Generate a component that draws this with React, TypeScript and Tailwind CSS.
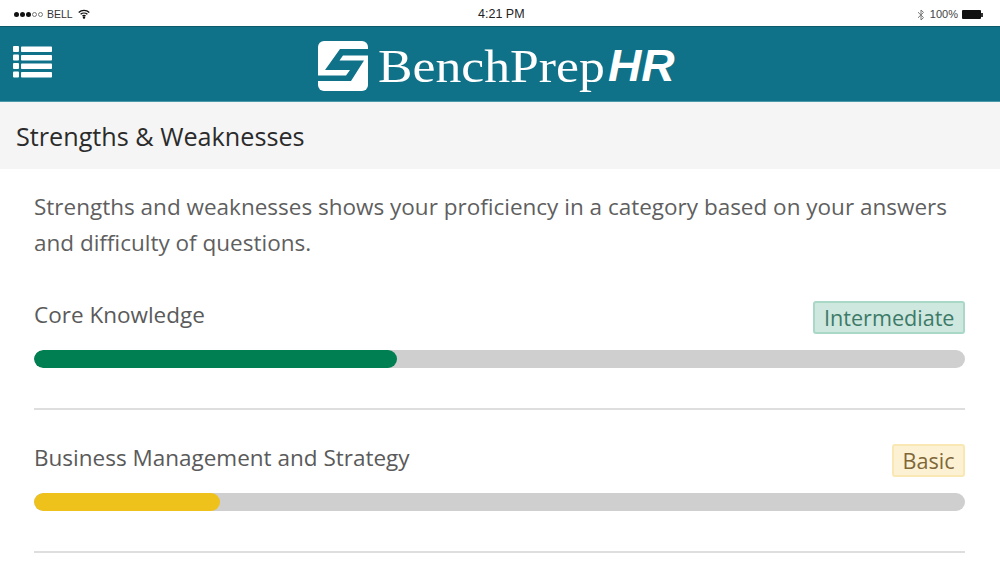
import React from "react";

function ListIcon() {
  return (
    <svg width="42" height="34" viewBox="0 0 42 34" fill="#fff">
      {[0, 8.5, 17, 25.5].map((y) => (
        <g key={y}>
          <rect x="1" y={y + 1} width="6" height="6" rx="1" />
          <rect x="9" y={y + 1.5} width="31" height="5.5" rx="0.8" />
        </g>
      ))}
    </svg>
  );
}

function Logo() {
  return (
    <svg width="50" height="50" viewBox="0 0 50 50">
      <rect width="50" height="50" rx="6" fill="#fff" />
      <path d="M22 8H50V14.5H25L21.5 19.5H46L33 40H0V34.5H28L32 29H7Z" fill="#107288" />
    </svg>
  );
}

function Row({ label, level, pct, barColor, badge }: { label: string; level: string; pct: number; barColor: string; badge: string }) {
  return (
    <div className="border-b-2 border-[#dedede] h-[109px] mb-[34px]">
      <div className="flex justify-between items-start h-[49px]">
        <span className="text-[22.5px] leading-[28px] text-[#5a5a5a]">{label}</span>
        <span className={`text-[21.6px] leading-[29px] px-[8.5px] h-[33px] rounded-[3px] border-2 ${badge}`}>{level}</span>
      </div>
      <div className="h-[18px] rounded-[9px] bg-[#cfcfcf] overflow-hidden">
        <div className={`h-full rounded-[9px] ${barColor}`} style={{ width: `${pct}%` }} />
      </div>
    </div>
  );
}

export default function App() {
  return (
    <div className="w-[1000px] h-[563px] overflow-hidden bg-white font-['Open_Sans',sans-serif]">
      <div className="relative h-[26px] flex items-center justify-between pl-[14px] pr-[17px] pt-[3px] font-['Liberation_Sans',sans-serif] text-[10.5px] text-[#333]">
        <div className="flex items-center gap-[3px]">
          <span className="flex gap-[1px]">
            {[1, 1, 1, 0, 0].map((f, i) => (
              <span key={i} className={f ? "w-[5px] h-[5px] rounded-full bg-[#111]" : "w-[5px] h-[5px] rounded-full border border-[#777]"} />
            ))}
          </span>
          <span className="ml-[1px]">BELL</span>
          <svg width="12" height="10" viewBox="0 0 12 10" className="ml-[2px] -mt-[2px]" fill="none" stroke="#111" strokeWidth="1.3">
            <path d="M0.7 3.4C3.6 .7 8.4 .7 11.3 3.4" />
            <path d="M2.6 5.3C4.5 3.6 7.5 3.6 9.4 5.3" />
            <path d="M4.4 7C5.3 6.3 6.7 6.3 7.6 7" />
            <circle cx="6" cy="8.6" r=".6" fill="#111" />
          </svg>
        </div>
        <span className="absolute left-[478px] top-[7px] text-[12.5px] leading-[15px] text-[#222]">4:21 PM</span>
        <div className="flex items-center gap-[6px]">
          <svg width="8" height="12" viewBox="0 0 8 12" fill="none" stroke="#777" strokeWidth="1">
            <path d="M1 3.2 6.5 8.6 4 11V1L6.5 3.4 1 8.8" />
          </svg>
          <span className="text-[11px] text-[#444] -ml-[1px]">100%</span>
          <span className="flex items-center -ml-[2px]">
            <span className="w-[19px] h-[9px] bg-[#111] rounded-[1px]" />
            <span className="w-[2px] h-[4px] bg-[#333]" />
          </span>
        </div>
      </div>

      <div className="relative h-[76px] bg-[#107288] border-t border-t-[#0b5a6c] border-b border-b-[#4a9aac] flex items-center">
        <div className="absolute left-[12px] top-[18px]">
          <ListIcon />
        </div>
        <div className="flex items-center ml-[318px] mt-[3px]">
          <Logo />
          <span className="ml-[10px] w-[230px] origin-left scale-x-[1.1] font-['Liberation_Serif',serif] text-[47px] leading-[60px] text-white">BenchPrep</span>
          <span className="w-[67px] origin-left scale-x-[1.05] font-['Liberation_Sans',sans-serif] font-bold italic text-[44px] leading-[60px] text-white">HR</span>
        </div>
      </div>

      <div className="h-[67px] bg-[#f5f5f5] flex items-center pl-[16px]">
        <span className="text-[25.2px] text-[#2b2b2b] leading-[32px]">Strengths &amp; Weaknesses</span>
      </div>

      <div className="pl-[34px] pr-[35px] pt-[20px]">
        <p className="text-[22.5px] leading-[36px] text-[#5f5f5f] h-[112px]">
          Strengths and weaknesses shows your proficiency in a category based on your answers and difficulty of questions.
        </p>
        <Row label="Core Knowledge" level="Intermediate" pct={39} barColor="bg-[#008052]" badge="bg-[#cfe8df] border-[#a9d8c6] text-[#3d7a68]" />
        <Row label="Business Management and Strategy" level="Basic" pct={20} barColor="bg-[#efc11b]" badge="bg-[#fcf2d3] border-[#fae8b4] text-[#80673a]" />
      </div>
    </div>
  );
}
